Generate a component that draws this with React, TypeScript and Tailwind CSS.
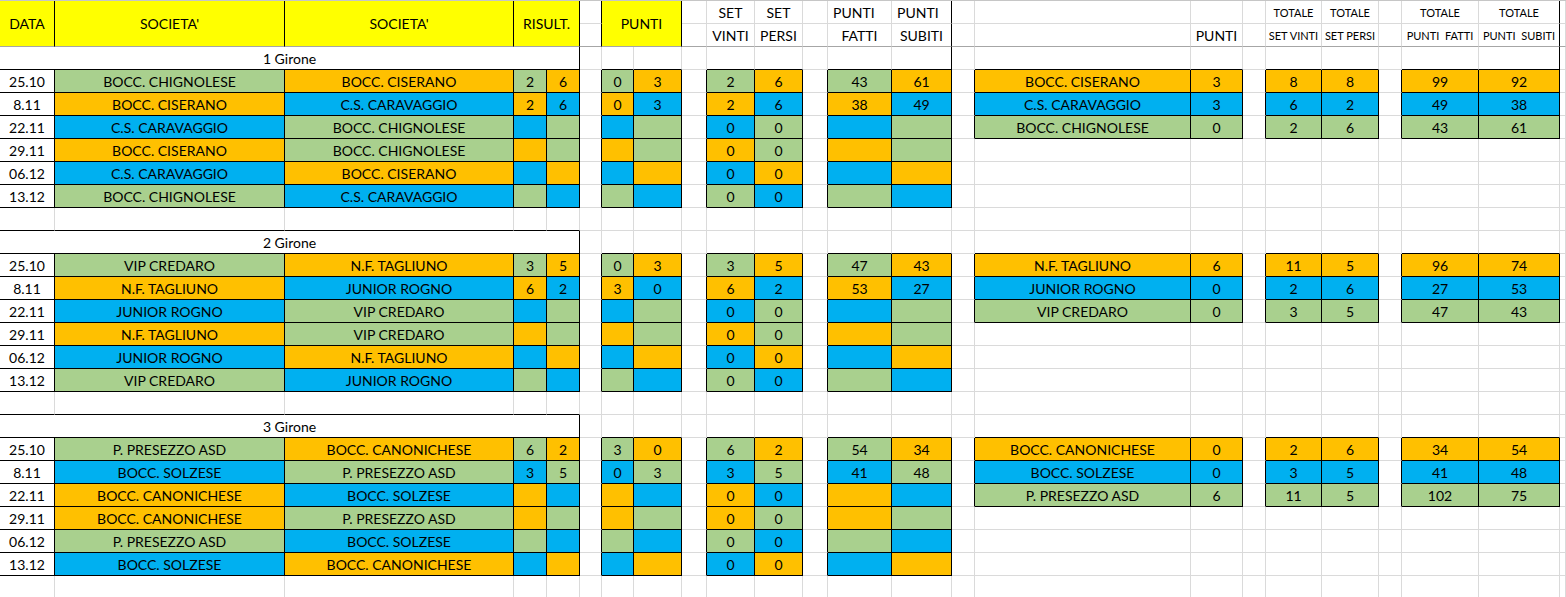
import React from 'react';

type Bg = 'w' | 'y' | 'g' | 'o' | 'b';

interface Spec {
  r: number;
  c: number;
  cs: number;
  rs: number;
  text: string;
  bg: Bg;
  box: boolean;
  rb?: boolean;
  small?: boolean;
  left?: boolean;
}

const bgClass: Record<Bg, string> = {
  w: 'bg-white',
  y: 'bg-[#ffff00]',
  g: 'bg-[#a9d08e]',
  o: 'bg-[#ffc000]',
  b: 'bg-[#00b0f0]',
};

const teamColor: Record<string, Bg> = {
  'BOCC. CHIGNOLESE': 'g',
  'BOCC. CISERANO': 'o',
  'C.S. CARAVAGGIO': 'b',
  'VIP CREDARO': 'g',
  'N.F. TAGLIUNO': 'o',
  'JUNIOR ROGNO': 'b',
  'P. PRESEZZO ASD': 'g',
  'BOCC. CANONICHESE': 'o',
  'BOCC. SOLZESE': 'b',
};

// date, home, away, risult x2, punti x2, set x2, punti fatti/subiti
type Match = [string, string, string, string, string, string, string, string, string, string, string];
// team, punti, set vinti, set persi, punti fatti, punti subiti
type Standing = [string, string, string, string, string, string];

const empty = (d: string, h: string, a: string): Match => [d, h, a, '', '', '', '', '0', '0', '', ''];

const groups: { title: string; matches: Match[]; table: Standing[] }[] = [
  {
    title: '1 Girone',
    matches: [
      ['25.10', 'BOCC. CHIGNOLESE', 'BOCC. CISERANO', '2', '6', '0', '3', '2', '6', '43', '61'],
      ['8.11', 'BOCC. CISERANO', 'C.S. CARAVAGGIO', '2', '6', '0', '3', '2', '6', '38', '49'],
      empty('22.11', 'C.S. CARAVAGGIO', 'BOCC. CHIGNOLESE'),
      empty('29.11', 'BOCC. CISERANO', 'BOCC. CHIGNOLESE'),
      empty('06.12', 'C.S. CARAVAGGIO', 'BOCC. CISERANO'),
      empty('13.12', 'BOCC. CHIGNOLESE', 'C.S. CARAVAGGIO'),
    ],
    table: [
      ['BOCC. CISERANO', '3', '8', '8', '99', '92'],
      ['C.S. CARAVAGGIO', '3', '6', '2', '49', '38'],
      ['BOCC. CHIGNOLESE', '0', '2', '6', '43', '61'],
    ],
  },
  {
    title: '2 Girone',
    matches: [
      ['25.10', 'VIP CREDARO', 'N.F. TAGLIUNO', '3', '5', '0', '3', '3', '5', '47', '43'],
      ['8.11', 'N.F. TAGLIUNO', 'JUNIOR ROGNO', '6', '2', '3', '0', '6', '2', '53', '27'],
      empty('22.11', 'JUNIOR ROGNO', 'VIP CREDARO'),
      empty('29.11', 'N.F. TAGLIUNO', 'VIP CREDARO'),
      empty('06.12', 'JUNIOR ROGNO', 'N.F. TAGLIUNO'),
      empty('13.12', 'VIP CREDARO', 'JUNIOR ROGNO'),
    ],
    table: [
      ['N.F. TAGLIUNO', '6', '11', '5', '96', '74'],
      ['JUNIOR ROGNO', '0', '2', '6', '27', '53'],
      ['VIP CREDARO', '0', '3', '5', '47', '43'],
    ],
  },
  {
    title: '3 Girone',
    matches: [
      ['25.10', 'P. PRESEZZO ASD', 'BOCC. CANONICHESE', '6', '2', '3', '0', '6', '2', '54', '34'],
      ['8.11', 'BOCC. SOLZESE', 'P. PRESEZZO ASD', '3', '5', '0', '3', '3', '5', '41', '48'],
      empty('22.11', 'BOCC. CANONICHESE', 'BOCC. SOLZESE'),
      empty('29.11', 'BOCC. CANONICHESE', 'P. PRESEZZO ASD'),
      empty('06.12', 'P. PRESEZZO ASD', 'BOCC. SOLZESE'),
      empty('13.12', 'BOCC. SOLZESE', 'BOCC. CANONICHESE'),
    ],
    table: [
      ['BOCC. CANONICHESE', '0', '2', '6', '34', '54'],
      ['BOCC. SOLZESE', '0', '3', '5', '41', '48'],
      ['P. PRESEZZO ASD', '6', '11', '5', '102', '75'],
    ],
  },
];

const NCOLS = 24;
const NROWS = 26;

function buildSheet() {
  const specs: Spec[] = [];
  const occ: (Spec | undefined)[][] = Array.from({ length: NROWS + 1 }, () => []);

  const put = (r: number, c: number, s: Partial<Spec> = {}) => {
    const spec: Spec = { r, c, cs: 1, rs: 1, text: '', bg: 'w', box: false, ...s };
    specs.push(spec);
    for (let rr = r; rr < r + spec.rs; rr++)
      for (let cc = c; cc < c + spec.cs; cc++) occ[rr][cc] = spec;
  };

  // header
  put(0, 0, { text: 'DATA', bg: 'y', box: true, rs: 2 });
  put(0, 1, { text: "SOCIETA'", bg: 'y', box: true, rs: 2 });
  put(0, 2, { text: "SOCIETA'", bg: 'y', box: true, rs: 2 });
  put(0, 3, { text: 'RISULT.', bg: 'y', box: true, rs: 2, cs: 2 });
  put(0, 6, { text: 'PUNTI', bg: 'y', box: true, rs: 2, cs: 2 });
  put(0, 9, { text: 'SET' });
  put(0, 10, { text: 'SET' });
  put(0, 12, { text: 'PUNTI', left: true });
  put(0, 13, { text: 'PUNTI', left: true, rb: true });
  put(0, 18, { text: 'TOTALE', small: true });
  put(0, 19, { text: 'TOTALE', small: true });
  put(0, 21, { text: 'TOTALE', small: true });
  put(0, 22, { text: 'TOTALE', small: true, rb: true });
  put(1, 9, { text: 'VINTI' });
  put(1, 10, { text: 'PERSI' });
  put(1, 12, { text: 'FATTI' });
  put(1, 13, { text: 'SUBITI', rb: true });
  put(1, 16, { text: 'PUNTI' });
  put(1, 18, { text: 'SET VINTI', small: true });
  put(1, 19, { text: 'SET PERSI', small: true });
  put(1, 21, { text: 'PUNTI  FATTI', small: true });
  put(1, 22, { text: 'PUNTI  SUBITI', small: true, rb: true });

  let r = 2;
  groups.forEach((g, gi) => {
    put(r, 0, { text: g.title, box: true, cs: 5 });
    if (gi === 0) {
      put(r, 13, { rb: true });
      put(r, 22, { rb: true });
    }
    r++;
    g.matches.forEach((m, i) => {
      const ch = teamColor[m[1]];
      const ca = teamColor[m[2]];
      put(r, 0, { text: m[0], box: true });
      put(r, 1, { text: m[1], bg: ch, box: true });
      put(r, 2, { text: m[2], bg: ca, box: true });
      put(r, 3, { text: m[3], bg: ch, box: true });
      put(r, 4, { text: m[4], bg: ca, box: true });
      put(r, 6, { text: m[5], bg: ch, box: true });
      put(r, 7, { text: m[6], bg: ca, box: true });
      put(r, 9, { text: m[7], bg: ch, box: true });
      put(r, 10, { text: m[8], bg: ca, box: true });
      put(r, 12, { text: m[9], bg: ch, box: true });
      put(r, 13, { text: m[10], bg: ca, box: true });
      const t = g.table[i];
      if (t) {
        const ct = teamColor[t[0]];
        put(r, 15, { text: t[0], bg: ct, box: true });
        put(r, 16, { text: t[1], bg: ct, box: true });
        put(r, 18, { text: t[2], bg: ct, box: true });
        put(r, 19, { text: t[3], bg: ct, box: true });
        put(r, 21, { text: t[4], bg: ct, box: true });
        put(r, 22, { text: t[5], bg: ct, box: true });
      }
      r++;
    });
    r++; // blank row
  });

  // fill the rest with empty white cells
  for (let rr = 0; rr < NROWS; rr++)
    for (let cc = 0; cc < NCOLS; cc++) if (!occ[rr][cc]) put(rr, cc);

  specs.sort((a, b) => a.r - b.r || a.c - b.c);
  return { specs, occ };
}

const { specs, occ } = buildSheet();
const boxedAt = (r: number, c: number) => !!occ[r]?.[c]?.box;

function Cell({ s }: { s: Spec }) {
  const rightBlack = s.box || s.rb || boxedAt(s.r, s.c + s.cs);
  const freeze = s.r + s.rs - 1 === 1;
  const bottomBlack = s.box || boxedAt(s.r + s.rs, s.c);

  const right = rightBlack ? 'border-r-black' : 'border-r-[#dadada]';
  const bottom = freeze ? 'border-b-[#a6a6a6]' : bottomBlack ? 'border-b-black' : 'border-b-[#dadada]';
  const colSpan = s.cs === 5 ? 'col-span-5' : s.cs === 2 ? 'col-span-2' : '';
  const rowSpan = s.rs === 2 ? 'row-span-2' : '';
  const size = s.small ? 'text-[11px]' : 'text-[14px]';
  const align = s.left ? 'justify-start pl-[5px]' : 'justify-center';

  return (
    <div
      className={`flex items-center overflow-hidden whitespace-pre border-r border-b pt-px ${right} ${bottom} ${colSpan} ${rowSpan} ${bgClass[s.bg]} ${size} ${align}`}
    >
      {s.text}
    </div>
  );
}

export default function App() {
  return (
    <div className="w-full h-[597px] overflow-hidden bg-white text-black font-[Lato,sans-serif]">
      <div className="grid grid-cols-[55px_230px_229px_33px_33px_22px_32px_48px_25px_48px_48px_25px_64px_60px_23px_216px_52px_23px_56px_57px_23px_77px_81px_1fr] auto-rows-[23px] border-t border-t-[#c6c6c6] leading-none">
        {specs.map(s => (
          <Cell key={`${s.r}-${s.c}`} s={s} />
        ))}
      </div>
    </div>
  );
}
